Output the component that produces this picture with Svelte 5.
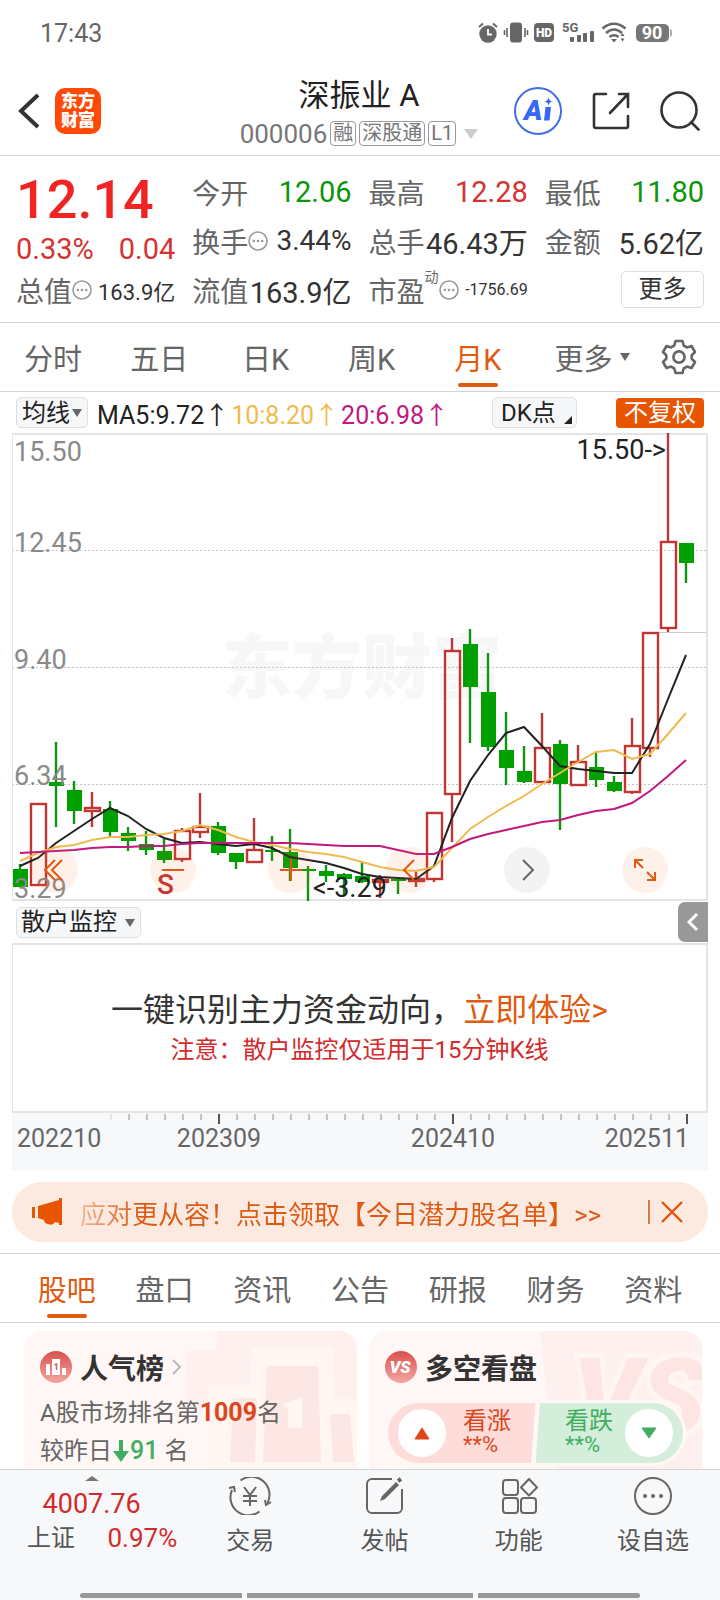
<script lang="ts">
	type Candle = { up: boolean; high: number; low: number; top: number; bottom: number };

	const step = 18;
	const firstX = 8;

	// [direction, high, low, body top, body bottom], in chart units
	const rows: [string, number, number, number, number][] = [
		['d', 431, 454, 436, 454],
		['u', 370, 453, 370, 453],
		['d', 309, 394, 349, 353],
		['d', 348, 391, 357, 378],
		['u', 359, 394, 374, 379],
		['d', 368, 404, 376, 399],
		['d', 394, 418, 400, 408],
		['d', 398, 422, 411, 417],
		['d', 406, 430, 418, 427],
		['u', 395, 429, 397, 427],
		['u', 360, 405, 393, 400],
		['d', 389, 422, 393, 420],
		['d', 420, 436, 420, 429],
		['u', 385, 430, 416, 430],
		['d', 403, 428, 417, 419],
		['d', 396, 448, 419, 435],
		['d', 433, 468, 436, 438],
		['d', 432, 449, 438, 443],
		['d', 440, 462, 441, 446],
		['d', 428, 450, 443, 449],
		['u', 442, 465, 446, 450],
		['d', 444, 461, 446, 448],
		['u', 439, 454, 445, 449],
		['u', 380, 449, 379, 447],
		['u', 205, 409, 217, 362],
		['d', 196, 310, 211, 254],
		['d', 220, 318, 259, 314],
		['d', 279, 352, 317, 335],
		['d', 313, 350, 338, 349],
		['u', 280, 350, 314, 350],
		['d', 307, 397, 311, 351],
		['u', 312, 352, 328, 353],
		['d', 320, 354, 334, 347],
		['d', 343, 359, 349, 358],
		['u', 285, 361, 312, 360],
		['u', 200, 324, 199, 316],
		['u', 0, 199, 108, 196],
		['d', 110, 150, 110, 130],
	];
	const candles: Candle[] = rows.map(([dir, high, low, top, bottom]) => ({
		up: dir === 'u', high, low, top, bottom,
	}));

	const averages = [
		{
			name: 'MA5', value: '9.72', color: '#222222',
			levels: [433, 425, 410, 398, 386, 375, 383, 396, 405, 410, 409, 411, 413, 411, 415, 424, 427, 430, 435, 441, 444, 445, 446, 433, 385, 348, 322, 300, 294, 313, 333, 336, 338, 340, 340, 311, 266, 222],
		},
		{
			name: '10', value: '8.20', color: '#f0bb4e',
			levels: [428, 420, 414, 412, 407, 404, 404, 402, 401, 398, 392, 397, 404, 409, 412, 416, 419, 421, 424, 429, 434, 437, 438, 434, 415, 396, 384, 373, 363, 351, 340, 329, 319, 317, 326, 321, 301, 280],
		},
		{
			name: '20', value: '6.98', color: '#c2187f',
			levels: [420, 419, 418, 417, 415, 414, 414, 413, 413, 411, 410, 410, 410, 410, 410, 410, 411, 412, 413, 413, 413, 417, 421, 421, 414, 406, 401, 397, 393, 389, 387, 382, 378, 376, 370, 358, 343, 327],
		},
	];

	const priceLabels = [
		{ text: '15.50', y: 28 },
		{ text: '12.45', y: 119 },
		{ text: '9.40', y: 236 },
		{ text: '6.34', y: 352 },
		{ text: '3.29', y: 465 },
	];

	const dates = [
		{ text: '202210', x: 5, anchor: 'start' },
		{ text: '202309', x: 207, anchor: 'middle' },
		{ text: '202410', x: 441, anchor: 'middle' },
		{ text: '202511', x: 677, anchor: 'end' },
	];
	const ticks = Array.from({ length: 33 }, (_, i) => i + 5);
	const majorTicks = [11, 24, 37];

	const periods = ['分时', '五日', '日K', '周K', '月K'];
	let period = $state('月K');

	const sections = ['股吧', '盘口', '资讯', '公告', '研报', '财务', '资料'];
	let section = $state('股吧');

	const xAt = (i: number) => firstX + i * step;
	const linePoints = (levels: number[]) => levels.map((y, i) => `${xAt(i)},${y}`).join(' ');
</script>

{#snippet hint()}
	<svg class="hint" viewBox="0 0 20 20" aria-hidden="true">
		<circle cx="10" cy="10" r="9" fill="none" stroke="#999" stroke-width="1.6" />
		<circle cx="5.8" cy="10" r="1.3" /><circle cx="10" cy="10" r="1.3" /><circle cx="14.2" cy="10" r="1.3" />
	</svg>
{/snippet}

<div class="app">
	<div class="status-bar">
		<span class="clock">17:43</span>
		<svg class="status-icons" width="194" height="24" viewBox="0 0 194 24" aria-hidden="true">
			<g fill="#666">
				<circle cx="10" cy="13" r="8.7" />
				<path d="M1 6 5 2.5M19 6 15 2.5" stroke="#666" stroke-width="2" />
				<path d="M10 8v5.5h4" fill="none" stroke="#fff" stroke-width="1.8" />
				<rect x="32" y="1.5" width="12" height="20" rx="3" />
				<path d="M29 7v9M47 7v9M26.5 9v5M49.5 9v5" stroke="#666" stroke-width="1.6" />
				<rect x="56" y="2" width="20" height="19" rx="4" />
				<text x="66" y="16" class="hd">HD</text>
				<text x="84" y="11" class="net">5G</text>
				<rect x="92" y="16" width="4" height="5" rx="1" />
				<rect x="99" y="14" width="4" height="7" rx="1" />
				<rect x="105" y="12" width="4" height="9" rx="1" />
				<rect x="112" y="10" width="4" height="11" rx="1" />
				<g fill="none" stroke="#666" stroke-width="2.6">
					<path d="M124.500 7.500Q136-2 147.500 7.500" />
					<path d="M128 12Q136 5 144 12" />
					<path d="M131.500 16Q136 12.500 140.500 16" />
				</g>
				<path d="M133 18h6l-3 3.500zM142.500 15h4l-2-3zM142.500 17.500h4l-2 3z" />
				<rect x="158" y="3" width="33" height="18" rx="5" fill="#777" />
				<path d="M192 8q2 0 2 4t-2 4z" fill="#aaa" />
				<text x="174" y="18" class="battery">90</text>
			</g>
		</svg>
	</div>

	<header class="top-bar">
		<div class="top-left">
			<button class="icon-btn" aria-label="返回">
				<svg width="22" height="36" viewBox="0 0 22 36"><path d="M20 2 3 18l17 16" fill="none" stroke="#333" stroke-width="4" /></svg>
			</button>
			<a class="logo" href="#home"><span>东方</span><span>财富</span></a>
		</div>
		<div class="stock">
			<h1>深振业 A</h1>
			<div class="stock-meta">
				<span class="code">000006</span>
				<span class="tag">融</span>
				<span class="tag">深股通</span>
				<span class="tag">L1</span>
				<span class="caret"></span>
			</div>
		</div>
		<div class="top-right">
			<button class="icon-btn" aria-label="AI">
				<svg width="48" height="48" viewBox="0 0 48 48">
					<circle cx="24" cy="24" r="23" fill="none" stroke="#3f6ee8" stroke-width="2" />
					<text x="10" y="33" class="ai">A</text>
					<path d="M31.500 20h5.500l-1.500 13.500h-5.500z" fill="#3668f5" />
					<path d="M34.500 10.500q.6 3.500 4 4-3.400.6-4 4-.6-3.400-4-4 3.400-.5 4-4z" fill="#3668f5" />
				</svg>
			</button>
			<button class="icon-btn" aria-label="分享">
				<svg width="38" height="38" viewBox="0 0 38 38" fill="none" stroke="#333" stroke-width="2.600" stroke-linecap="round">
					<path d="M14 2H4a2 2 0 0 0-2 2v30a2 2 0 0 0 2 2h30a2 2 0 0 0 2-2V24M27 2h9v13M36 2 18 21" />
				</svg>
			</button>
			<button class="icon-btn" aria-label="搜索">
				<svg width="40" height="40" viewBox="0 0 40 40" fill="none" stroke="#333" stroke-width="2.600" stroke-linecap="round">
					<circle cx="19" cy="19" r="17.500" /><path d="m31.500 31.500 7 7" />
				</svg>
			</button>
		</div>
	</header>

	<section class="quote">
		<div class="quote-col">
			<strong class="price">12.14</strong>
			<div class="change"><span>0.33%</span><span>0.04</span></div>
			<div class="cell"><span class="label">总值</span>{@render hint()}<span class="value small">163.9亿</span></div>
		</div>
		<div class="quote-col">
			<div class="cell"><span class="label">今开</span><span class="value down">12.06</span></div>
			<div class="cell"><span class="label">换手</span>{@render hint()}<span class="value mid">3.44%</span></div>
			<div class="cell"><span class="label">流值</span><span class="value">163.9亿</span></div>
		</div>
		<div class="quote-col">
			<div class="cell"><span class="label">最高</span><span class="value rise">12.28</span></div>
			<div class="cell"><span class="label">总手</span><span class="value">46.43万</span></div>
			<div class="cell"><span class="label">市盈</span><sup>动</sup>{@render hint()}<span class="value tiny">-1756.69</span></div>
		</div>
		<div class="quote-col">
			<div class="cell"><span class="label">最低</span><span class="value down">11.80</span></div>
			<div class="cell"><span class="label">金额</span><span class="value">5.62亿</span></div>
			<div class="cell"><button class="more-btn">更多</button></div>
		</div>
	</section>

	<nav class="periods">
		{#each periods as item}
			<button class="tab" class:active={item === period} onclick={() => (period = item)}>{item}</button>
		{/each}
		<button class="tab more-tab">更多<span class="arrow-down"></span></button>
		<button class="tab" aria-label="设置">
			<svg width="36" height="36" viewBox="0 0 36 36" fill="none" stroke="#666" stroke-width="2.600" stroke-linejoin="round">
				<path d="M14.500 2h7l1.200 4.500 3.300 1.900L30.500 7l3.500 6-3.300 3.200v3.600L34 23l-3.500 6-4.500-1.400-3.300 1.900L21.500 34h-7l-1.200-4.500L10 27.600 5.500 29 2 23l3.300-3.200v-3.600L2 13l3.500-6L10 8.400l3.300-1.900z" />
				<circle cx="18" cy="18" r="5.600" />
			</svg>
		</button>
	</nav>

	<main>
		<div class="indicators">
			<label class="picker"><select aria-label="指标"><option>均线</option></select></label>
			<div class="averages">
				{#each averages as line}
					<span style="color: {line.color}">{line.name}:{line.value}↑</span>
				{/each}
			</div>
			<label class="picker corner"><select aria-label="DK点"><option>DK点</option></select></label>
			<button class="adjust">不复权</button>
		</div>

		<div class="chart">
			<svg class="plot" viewBox="0 0 696 468" role="img" aria-label="月K线图">
				<text x="210" y="260" class="watermark">东方财富</text>
				<g stroke="#c4c4c4" stroke-dasharray="2 2">
					<path d="M0 117.500h696M0 234.500h696M0 351.500h696" />
				</g>
				<path d="M646 199.500h50" stroke="#ccc" />
				<g fill="none" stroke="#e4e4e4">
					<path d="M.5 0v468" /><path d="M0 1h696M0 467h696M695 0v468" stroke-width="2" />
				</g>
				{#each candles as candle, i}
					{#if candle.up}
						<path d="M{xAt(i)} {candle.high}V{candle.top}M{xAt(i)} {candle.bottom}V{candle.low}" stroke="#b83a3a" stroke-width="2.400" />
						<rect x={xAt(i) - 7} y={candle.top + 1} width="15" height={candle.bottom - candle.top - 2} fill="none" stroke="#c23531" stroke-width="2.400" />
					{:else}
						<path d="M{xAt(i)} {candle.high}V{candle.low}" stroke="#109410" stroke-width="2.400" />
						<rect x={xAt(i) - 7} y={candle.top} width="15" height={candle.bottom - candle.top} fill="#00a000" />
					{/if}
				{/each}
				{#each averages as line}
					<polyline points={linePoints(line.levels)} fill="none" stroke={line.color} stroke-width="2" />
				{/each}
				{#each priceLabels as label}
					<text x="2" y={label.y} class="axis">{label.text}</text>
				{/each}
				<text x="654" y="26" class="mark" text-anchor="end">15.50-&gt;</text>
				<text x="301" y="464" class="mark">&lt;-3.29</text>
				<text x="145" y="461" class="signal">S</text>
			</svg>
			<div class="tools">
				<button aria-label="最左"><svg viewBox="0 0 46 46"><path d="M23 13 13 23l10 10M30 13 20 23l10 10" /></svg></button>
				<button aria-label="缩小"><svg viewBox="0 0 46 46"><path d="M12 23h22" /></svg></button>
				<button aria-label="放大"><svg viewBox="0 0 46 46"><path d="M12 23h22M23 12v22" /></svg></button>
				<button aria-label="左移"><svg viewBox="0 0 46 46"><path d="M28 13 18 23l10 10" /></svg></button>
				<button class="grey" aria-label="右移"><svg viewBox="0 0 46 46"><path d="m19 13 10 10-10 10" /></svg></button>
				<button aria-label="全屏"><svg viewBox="0 0 46 46"><path d="M13 21v-8h8M13 13l8 8M25 25l8 8M33 25v8h-8" /></svg></button>
			</div>
		</div>

		<div class="monitor-bar">
			<label class="picker wide"><select aria-label="副图"><option>散户监控</option></select></label>
			<button class="collapse" aria-label="收起">
				<svg width="12" height="20" viewBox="0 0 12 20"><path d="m10 2-8 8 8 8" fill="none" stroke="#fff" stroke-width="3" /></svg>
			</button>
		</div>

		<section class="monitor">
			<p class="pitch">一键识别主力资金动向，<a href="#trial">立即体验&gt;</a></p>
			<p class="note">注意：散户监控仅适用于15分钟K线</p>
		</section>

		<svg class="dates" viewBox="0 0 696 57" role="img" aria-label="日期">
			{#each ticks as i}
				{#if majorTicks.includes(i)}
					<path d="M{xAt(i) + 1} 1v10" stroke="#555" stroke-width="2" />
				{:else}
					<path d="M{xAt(i) + 1} 1v6" stroke={i === 5 ? '#e4e4e4' : '#c4c4c4'} stroke-width="2" />
				{/if}
			{/each}
			{#each dates as date}
				<text x={date.x} y="34" text-anchor={date.anchor}>{date.text}</text>
			{/each}
		</svg>

		<div class="promo">
			<svg width="32" height="28" viewBox="0 0 32 28" aria-hidden="true" fill="#e85500">
				<path d="M0 9h3v11H0zM6 8 27 2V0h3v27h-3v-2l-4-1q-2 4-7 2-4-1-4-4l-6-2z" />
			</svg>
			<a href="#promo">应对更从容！点击领取【今日潜力股名单】&gt;&gt;</a>
			<button class="close" aria-label="关闭">
				<svg width="24" height="24" viewBox="0 0 24 24"><path d="m2 2 20 20M22 2 2 22" fill="none" stroke="#e0560f" stroke-width="2.400" /></svg>
			</button>
		</div>

		<nav class="sections">
			{#each sections as item}
				<button class="tab" class:active={item === section} onclick={() => (section = item)}>{item}</button>
			{/each}
		</nav>

		<div class="cards">
			<article class="card">
				<svg class="backdrop" viewBox="0 0 333 160" aria-hidden="true">
					<path d="M194 0h139v160H184V80h-22V20h30z" fill="#fef0ee" />
					<path d="M228 16h81l2 52h22v92H184V54h42z" fill="#fff5f3" />
					<path d="M243 35h51l3 96h-58zM209 67h24l-2 64h-25zM306 83h20l4 48h-21z" fill="#fde7e5" />
					<path d="m258 73 20-7v31h-14V77z" fill="#fff5f3" />
				</svg>
				<h2>
					<svg width="32" height="32" viewBox="0 0 32 32" aria-hidden="true">
						<defs><linearGradient id="badge-a" x2="0" y2="1"><stop stop-color="#d9504d" /><stop offset="1" stop-color="#f3a7a2" /></linearGradient></defs>
						<circle cx="16" cy="16" r="16" fill="url(#badge-a)" />
						<path d="M12 8h8v16h-8zM6 13h4v11H6zM22 17h4v7h-4z" fill="#fff" />
						<path d="m14.500 14 2-1v6" fill="none" stroke="#dc6360" stroke-width="1.500" />
					</svg>
					人气榜
					<svg class="chevron" width="10" height="16" viewBox="0 0 10 16" aria-hidden="true"><path d="m1 1 7 7-7 7" fill="none" stroke="#bbb" stroke-width="2" /></svg>
				</h2>
				<p>A股市场排名第<b>1009</b>名</p>
				<p>
					较昨日<svg width="18" height="22" viewBox="0 0 18 22" aria-hidden="true"><path d="M7 0h4v11h6l-8 11-8-11h6z" fill="#3fae62" /></svg><span class="drop">91</span> 名
				</p>
			</article>

			<article class="card">
				<svg class="backdrop" viewBox="0 0 333 160" aria-hidden="true">
					<path d="M171 0h162v160H188z" fill="#fef0ee" />
					<text x="204" y="102" class="versus">VS</text>
				</svg>
				<h2>
					<svg width="32" height="32" viewBox="0 0 32 32" aria-hidden="true">
						<circle cx="16" cy="16" r="16" fill="url(#badge-a)" />
						<text x="15" y="22" class="vs">VS</text>
					</svg>
					多空看盘
				</h2>
				<div class="vote">
					<button class="bull">
						<span class="knob"><svg width="16" height="14" viewBox="0 0 16 14"><path d="M8 2 15 13H1z" fill="#e0451a" stroke="#e0451a" stroke-linejoin="round" /></svg></span>
						<span class="vote-text"><span>看涨</span><small>**%</small></span>
					</button>
					<button class="bear">
						<span class="vote-text"><span>看跌</span><small>**%</small></span>
						<span class="knob"><svg width="16" height="14" viewBox="0 0 16 14"><path d="M8 12 15 2H1z" fill="#3fae62" stroke="#3fae62" stroke-linejoin="round" /></svg></span>
					</button>
				</div>
			</article>
		</div>
	</main>

	<footer>
		<div class="actions">
			<a class="index" href="#index">
				<span class="arrow-up"></span>
				<span class="points">4007.76</span>
				<span class="index-row"><span>上证</span><span class="pct">0.97%</span></span>
			</a>
			<button class="action">
				<svg width="44" height="38" viewBox="0 0 44 38" fill="none" stroke="#666" stroke-width="2">
					<path d="M12.500 3.500A18 18 0 0 1 39.500 26M31.500 34.500A18 18 0 0 1 4 13" />
					<path d="m1 11 5-1 1 5M43 25l-5 3-1-5M16 10l6 8 6-8M22 18v11M15 19h14M15 24h14" />
				</svg>
				交易
			</button>
			<button class="action">
				<svg width="38" height="38" viewBox="0 0 38 38" fill="none" stroke="#666" stroke-width="2">
					<path d="M26 2H6a5 5 0 0 0-5 5v24a5 5 0 0 0 5 5h25a5 5 0 0 0 5-5V12" />
					<path d="m14 24 2-5L30 5l3 3-14 14z" fill="#666" stroke="none" /><path d="m32 4 3-2" stroke-width="4" />
				</svg>
				发帖
			</button>
			<button class="action">
				<svg width="38" height="38" viewBox="0 0 38 38" fill="none" stroke="#666" stroke-width="2">
					<rect x="3" y="3" width="15" height="15" rx="3" /><rect x="3" y="21" width="15" height="15" rx="3" />
					<rect x="21" y="21" width="15" height="15" rx="3" /><path d="m29 2 8 8.500-8 8-8-8z" stroke-linejoin="round" />
				</svg>
				功能
			</button>
			<button class="action">
				<svg width="38" height="38" viewBox="0 0 38 38" fill="#666">
					<circle cx="19" cy="19" r="18" fill="none" stroke="#666" stroke-width="2" />
					<circle cx="11" cy="19" r="2" /><circle cx="19" cy="19" r="2" /><circle cx="27" cy="19" r="2" />
				</svg>
				设自选
			</button>
		</div>
		<div class="system-keys"><i></i><i></i><i></i></div>
	</footer>
</div>

<style>
	:global(body) {
		margin: 0;
		background: #fff;
	}

	.app {
		display: flex;
		flex-direction: column;
		height: 100vh;
		overflow: hidden;
		background: #fff;
		color: #333;
		font-family: Roboto, 'Noto Sans CJK SC', sans-serif;
		font-size: 24px;
	}

	.app * {
		box-sizing: border-box;
	}

	button,
	select {
		padding: 0;
		border: 0;
		background: none;
		color: inherit;
		font: inherit;
		cursor: pointer;
	}

	a {
		color: inherit;
		text-decoration: none;
	}

	svg {
		flex: none;
	}

	.status-bar {
		display: flex;
		align-items: center;
		justify-content: space-between;
		height: 66px;
		padding: 0 48px 0 40px;
		color: #666;
		font-size: 25px;
	}

	.hd {
		fill: #fff;
		font-size: 12px;
		font-weight: 900;
		text-anchor: middle;
	}

	.net {
		font-size: 13px;
		font-weight: 700;
	}

	.battery {
		fill: #fff;
		font-size: 18px;
		font-weight: 700;
		text-anchor: middle;
	}

	.top-bar {
		display: grid;
		grid-template-columns: 1fr auto 1fr;
		align-items: center;
		height: 90px;
		padding: 0 20px 0 18px;
		border-bottom: 1px solid #d4d4d4;
	}

	.top-left {
		display: flex;
		align-items: center;
		gap: 15px;
	}

	.top-right {
		display: flex;
		align-items: center;
		justify-content: flex-end;
		gap: 30px;
	}

	.icon-btn {
		display: flex;
	}

	.logo {
		display: flex;
		flex-direction: column;
		align-items: center;
		justify-content: center;
		width: 46px;
		height: 46px;
		border-radius: 10px;
		background: #ff4a05;
		color: #fff;
		font-size: 17px;
		font-weight: 900;
		line-height: 19px;
	}

	.stock {
		padding-top: 4px;
		text-align: center;
	}

	h1 {
		margin: 0;
		color: #222;
		font-size: 31px;
		font-weight: 400;
		line-height: 42px;
	}

	.stock-meta {
		display: flex;
		align-items: center;
		gap: 3px;
		height: 34px;
		color: #777;
	}

	.code {
		font-size: 26px;
	}

	.tag {
		padding: 0 2px;
		border: 1px solid #999;
		border-radius: 4px;
		font-size: 20px;
		line-height: 23px;
	}

	.caret {
		margin-left: 5px;
		border: 7px solid transparent;
		border-top: 10px solid #ccc;
		border-bottom: 0;
	}

	.ai {
		fill: #3668f5;
		font-size: 28px;
		font-weight: 900;
		font-style: italic;
	}

	.quote {
		display: grid;
		grid-template-columns: repeat(4, minmax(0, 1fr));
		gap: 17px;
		padding: 11px 16px 8px;
		border-bottom: 1px solid #d4d4d4;
	}

	.price {
		display: block;
		color: #f12424;
		font-size: 54px;
		font-weight: 500;
		line-height: 66px;
	}

	.change {
		display: flex;
		justify-content: space-between;
		color: #d63232;
		font-size: 29px;
		line-height: 32px;
	}

	.cell {
		display: flex;
		align-items: center;
		height: 49px;
		white-space: nowrap;
	}

	.label {
		color: #666;
		font-size: 28px;
	}

	.value {
		margin-left: auto;
		font-size: 29px;
	}

	.value.mid {
		font-size: 28px;
	}

	.value.small {
		font-size: 22px;
	}

	.value.tiny {
		font-size: 16px;
	}

	.value.down {
		color: #0a960a;
	}

	.value.rise {
		color: #d63232;
	}

	.hint {
		width: 20px;
		height: 20px;
		fill: #999;
	}

	sup {
		align-self: flex-start;
		color: #666;
		font-size: 14px;
		line-height: 24px;
	}

	.more-btn {
		width: 83px;
		height: 37px;
		margin-left: auto;
		border: 1px solid #ddd;
		border-radius: 5px;
		line-height: 35px;
	}

	.periods {
		display: grid;
		grid-template-columns: repeat(5, 9fr) 10fr 5fr;
		height: 69px;
		padding-right: 12px;
		border-bottom: 1px solid #d4d4d4;
	}

	.tab {
		position: relative;
		display: flex;
		align-items: center;
		justify-content: center;
		color: #666;
		font-size: 29px;
		white-space: nowrap;
	}

	.tab.active {
		color: #e05a10;
	}

	.tab.active::after {
		content: '';
		position: absolute;
		bottom: 4px;
		width: 40px;
		height: 4px;
		border-radius: 2px;
		background: #e05a10;
	}

	.more-tab {
		padding-left: 4px;
	}

	.arrow-down {
		margin-left: 7px;
		border: 5px solid transparent;
		border-top: 8px solid #666;
		border-bottom: 0;
	}

	main {
		flex: 1;
		min-height: 0;
		overflow: hidden;
	}

	.indicators {
		display: flex;
		align-items: center;
		height: 41px;
		padding: 0 16px;
	}

	.picker {
		position: relative;
		height: 31px;
		border: 1px solid #dcdfe4;
		border-radius: 5px;
		background: #f6f7f9;
	}

	.picker select {
		height: 29px;
		padding: 0 17px 0 5px;
		appearance: none;
		color: #222;
		line-height: 28px;
	}

	.picker::after {
		content: '';
		position: absolute;
		top: 11px;
		right: 5px;
		border: 5px solid transparent;
		border-top: 8px solid #666;
		border-bottom: 0;
		pointer-events: none;
	}

	.picker.wide select {
		padding: 0 23px 0 4px;
	}

	.picker.corner {
		margin-left: auto;
	}

	.picker.corner select {
		padding: 0 20px 0 8px;
	}

	.picker.corner::after {
		top: 18px;
		right: 4px;
		border: 4px solid #222;
		border-top-color: transparent;
		border-left-color: transparent;
	}

	.averages {
		display: flex;
		gap: 2px;
		margin-left: 9px;
		font-size: 25px;
		white-space: nowrap;
	}

	.adjust {
		width: 88px;
		height: 30px;
		margin-left: 39px;
		border-radius: 4px;
		background: #e85500;
		color: #fff;
		line-height: 30px;
	}

	.chart {
		position: relative;
		margin: 0 12px;
	}

	.plot {
		display: block;
		width: 100%;
		overflow: visible;
	}

	.watermark {
		fill: #f7f7f7;
		font-size: 70px;
		font-weight: 900;
	}

	.axis {
		fill: #8a8a8a;
		font-size: 27px;
	}

	.mark {
		fill: #222;
		font-size: 27px;
	}

	.signal {
		fill: #c23531;
		font-size: 28px;
		font-weight: 500;
	}

	.tools {
		position: absolute;
		right: 40px;
		bottom: 8px;
		left: 20px;
		display: flex;
		justify-content: space-between;
	}

	.tools button {
		width: 46px;
		height: 46px;
		border-radius: 50%;
		background: rgba(245, 120, 50, 0.1);
	}

	.tools .grey {
		background: #f3f3f3;
	}

	.tools svg {
		display: block;
		fill: none;
		stroke: #e05a10;
		stroke-width: 2;
	}

	.tools .grey svg {
		stroke: #666;
	}

	.monitor-bar {
		display: flex;
		align-items: center;
		justify-content: space-between;
		height: 42px;
		padding: 0 12px 0 16px;
	}

	.collapse {
		display: flex;
		align-items: center;
		justify-content: center;
		width: 30px;
		height: 40px;
		border-radius: 7px 0 0 7px;
		background: #999;
	}

	.monitor {
		display: flex;
		flex-direction: column;
		align-items: center;
		justify-content: center;
		height: 170px;
		margin: 0 12px;
		padding-top: 4px;
		border: 2px solid #e4e4e4;
		border-left-width: 1px;
	}

	.monitor p {
		margin: 0;
		line-height: 40px;
	}

	.monitor .pitch {
		font-size: 32px;
	}

	.monitor a {
		color: #e05a10;
	}

	.monitor .note {
		color: #d22b2b;
	}

	.dates {
		display: block;
		margin: 0 12px;
		background: #f7f8fa;
	}

	.dates text {
		fill: #666;
		font-size: 25px;
	}

	.promo {
		display: flex;
		align-items: center;
		height: 60px;
		margin: 12px 12px 11px;
		padding: 0 24px 0 20px;
		border-radius: 30px;
		background: #fceae1;
		color: #dc5a14;
		font-size: 26px;
		white-space: nowrap;
	}

	.promo a {
		margin-left: 16px;
		background: linear-gradient(90deg, #f3b896, #dc5a14 60px);
		background-clip: text;
		color: transparent;
	}

	.close {
		display: flex;
		margin-left: auto;
		padding-left: 10px;
		border-left: 2px solid #d08050;
	}

	.sections {
		display: grid;
		grid-template-columns: repeat(7, 1fr);
		height: 70px;
		padding: 0 18px;
		border: solid #d4d4d4;
		border-width: 1px 0;
	}

	.cards {
		display: grid;
		grid-template-columns: 1fr 1fr;
		gap: 12px;
		padding: 8px 18px 0 24px;
	}

	.card {
		position: relative;
		height: 160px;
		padding: 20px 16px 0;
		overflow: hidden;
		border-radius: 18px;
		background: #fff7f5;
	}

	.card > * {
		position: relative;
	}

	.card .backdrop {
		position: absolute;
		inset: 0;
		width: 100%;
	}

	h2 {
		display: flex;
		align-items: center;
		gap: 8px;
		height: 32px;
		margin: 0 0 11px;
		font-size: 28px;
		font-weight: 700;
	}

	.card p {
		display: flex;
		align-items: center;
		margin: 0;
		color: #666;
		line-height: 38px;
		white-space: pre;
	}

	.card b {
		color: #d9481c;
		font-size: 25px;
	}

	.card .drop {
		color: #3fae62;
		font-size: 25px;
		font-weight: 500;
	}

	.versus {
		fill: #fde5e3;
		stroke: #fff5f3;
		stroke-width: 10px;
		paint-order: stroke;
		font-size: 106px;
		font-weight: 900;
		font-style: italic;
	}

	.vs {
		fill: #fff;
		font-size: 17px;
		font-weight: 900;
		font-style: italic;
		text-anchor: middle;
	}

	.vote {
		display: flex;
		margin-top: 17px;
		border: 3px solid #fff8f7;
		border-radius: 33px;
		background: #fff8f7;
	}

	.card h2 + .vote {
		margin-top: -5px;
		transform: none;
	}

	.card:last-child h2 {
		margin-bottom: 22px;
	}

	.vote button {
		display: flex;
		flex: 1;
		align-items: center;
		height: 60px;
		padding: 0 10px;
	}

	.vote .bull {
		gap: 17px;
		border-radius: 30px 0 0 30px;
		background: #fddcd9;
		color: #d9481c;
		clip-path: polygon(0 0, 100% 0, 97% 100%, 0 100%);
	}

	.vote .bear {
		justify-content: flex-end;
		gap: 12px;
		border-radius: 0 30px 30px 0;
		background: #d5eedb;
		color: #3fae62;
		clip-path: polygon(3% 0, 100% 0, 100% 100%, 0 100%);
	}

	.knob {
		display: flex;
		align-items: center;
		justify-content: center;
		width: 48px;
		height: 48px;
		border-radius: 50%;
		background: #fff;
	}

	.vote-text {
		display: flex;
		flex-direction: column;
		line-height: 24px;
		text-align: left;
	}

	.vote-text small {
		font-size: 22px;
	}

	footer {
		display: flex;
		flex-direction: column;
		height: 131px;
		border-top: 1px solid #d4d4d4;
		background: #f7f8fa;
		color: #555;
	}

	.actions {
		display: grid;
		grid-template-columns: 183fr repeat(4, 134fr);
		flex: 1;
	}

	.index {
		display: flex;
		flex-direction: column;
		align-items: center;
		padding-top: 6px;
	}

	.arrow-up {
		border: 7px solid transparent;
		border-top: 0;
		border-bottom: 5px solid #777;
	}

	.points {
		color: #d22b2b;
		font-size: 27px;
		line-height: 46px;
	}

	.index-row {
		display: flex;
		align-items: center;
		justify-content: space-between;
		width: 100%;
		padding: 0 6px 0 27px;
		line-height: 22px;
	}

	.pct {
		color: #d22b2b;
		font-size: 26px;
	}

	.action {
		display: flex;
		flex-direction: column;
		align-items: center;
		gap: 10px;
		padding-top: 7px;
		line-height: 32px;
	}

	.system-keys {
		display: grid;
		grid-template-columns: 162fr 226fr 162fr;
		gap: 5px;
		padding: 0 80px 2px;
	}

	.system-keys i {
		height: 5px;
		background: #999;
	}

	.system-keys i:first-child {
		border-radius: 3px 0 0 3px;
	}

	.system-keys i:last-child {
		border-radius: 0 3px 3px 0;
	}
</style>
